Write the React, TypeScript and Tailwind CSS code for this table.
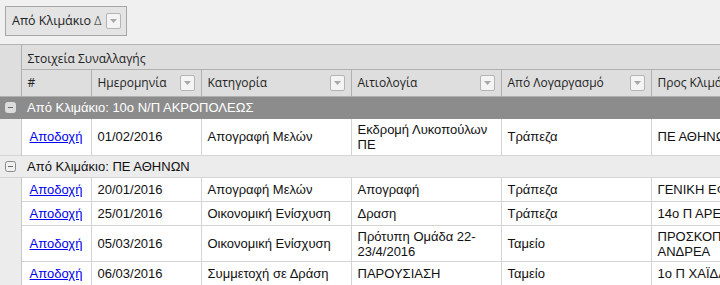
import React from "react";

const HF = "font-['Open_Sans',_'Noto_Sans',_sans-serif]";
const DF = "font-['Liberation_Sans',_Arial,_sans-serif]";

function FilterBtn() {
  return (
    <span className="inline-flex w-[15px] h-[16px] border border-[#b4b4b4] rounded-[2px] bg-[#f4f4f4] items-center justify-center shrink-0">
      <svg width="7" height="4" viewBox="0 0 7 4">
        <path d="M0 0 L7 0 L3.5 4 Z" fill="#a8a8a8" />
      </svg>
    </span>
  );
}

function Collapse({ dark }: { dark?: boolean }) {
  return (
    <svg width="11" height="11" viewBox="0 0 11 11" className="block">
      <rect x="0.5" y="0.5" width="10" height="10" rx="2" fill={dark ? "#dcdcdc" : "#f0f0f0"} stroke={dark ? "#dcdcdc" : "#8a8a8a"} />
      <rect x="3" y="5" width="5" height="1" fill="#6a6a6a" />
    </svg>
  );
}

type Row = { date: string; cat: string; reason: React.ReactNode; acc: string; to: React.ReactNode; h: string };

const g1: Row[] = [
  { date: "01/02/2016", cat: "Απογραφή Μελών", reason: <>Εκδρομή Λυκοπούλων<br />ΠΕ</>, acc: "Τράπεζα", to: "ΠΕ ΑΘΗΝΩΝ", h: "h-[37px]" },
];
const g2: Row[] = [
  { date: "20/01/2016", cat: "Απογραφή Μελών", reason: "Απογραφή", acc: "Τράπεζα", to: "ΓΕΝΙΚΗ ΕΦΟΡΕΙΑ", h: "h-[24px]" },
  { date: "25/01/2016", cat: "Οικονομική Ενίσχυση", reason: "Δραση", acc: "Τράπεζα", to: "14ο Π ΑΡΕΩΣ", h: "h-[24px]" },
  { date: "05/03/2016", cat: "Οικονομική Ενίσχυση", reason: <>Πρότυπη Ομάδα 22-<br />23/4/2016</>, acc: "Ταμείο", to: <>ΠΡΟΣΚΟΠΙΚΟ ΣΥΣΤΗΜΑ<br />ΑΝΔΡΕΑ</>, h: "h-[36px]" },
  { date: "06/03/2016", cat: "Συμμετοχή σε Δράση", reason: "ΠΑΡΟΥΣΙΑΣΗ", acc: "Ταμείο", to: "1ο Π ΧΑΪΔΑΡΙΟΥ", h: "h-[24px]" },
];

const cell = "border-b border-r border-[#d4d4d4] px-[6px] align-middle text-[13px] leading-[15px] text-[#111] whitespace-nowrap overflow-hidden";

function DataRow({ r }: { r: Row }) {
  return (
    <tr className={`${r.h} bg-white`}>
      <td className="bg-[#ececec] border-r border-[#c8c8c8]"></td>
      <td className={`${cell} text-center`}>
        <a href="#" className="text-[#0000ee] underline">Αποδοχή</a>
      </td>
      <td className={cell}>{r.date}</td>
      <td className={cell}>{r.cat}</td>
      <td className={cell}>{r.reason}</td>
      <td className={cell}>{r.acc}</td>
      <td className={cell}>{r.to}</td>
    </tr>
  );
}

function Th({ label, filter }: { label: string; filter?: boolean }) {
  return (
    <th className="border-r border-b border-[#b0b0b0] px-[6px] font-normal text-left align-middle">
      <div className="flex items-center justify-between">
        <span className="text-[12px] text-[#222] whitespace-nowrap">{label}</span>
        {filter && <FilterBtn />}
      </div>
    </th>
  );
}

export default function App() {
  return (
    <div className={`w-[720px] h-[285px] overflow-hidden bg-[#f0f0f0] ${DF}`}>
      <div className={`h-[45px] border-b border-[#b4b4b4] bg-[#f0f0f0] pt-[6px] pl-[5px] ${HF}`}>
        <div className="inline-flex items-center gap-[5px] h-[30px] border border-[#a6a6a6] bg-[#e4e4e4] pl-[6px] pr-[5px]">
          <span className="text-[12.5px] text-[#222]">Από Κλιμάκιο <span className="font-light">Δ</span></span>
          <FilterBtn />
        </div>
      </div>
      <table className="table-fixed border-collapse w-[800px]">
        <colgroup>
          <col className="w-[21px]" />
          <col className="w-[70px]" />
          <col className="w-[110px]" />
          <col className="w-[150px]" />
          <col className="w-[150px]" />
          <col className="w-[150px]" />
          <col className="w-[149px]" />
        </colgroup>
        <thead className={`bg-[#dedede] ${HF}`}>
          <tr className="h-[24px]">
            <th rowSpan={2} className="border-r border-b border-[#b0b0b0]"></th>
            <th colSpan={6} className="border-b border-[#b0b0b0] px-[6px] font-normal text-left">
              <span className="text-[12px] text-[#222]">Στοιχεία Συναλλαγής</span>
            </th>
          </tr>
          <tr className="h-[27px]">
            <Th label="#" />
            <Th label="Ημερομηνία" filter />
            <Th label="Κατηγορία" filter />
            <Th label="Αιτιολογία" filter />
            <Th label="Από Λογαργασμό" filter />
            <Th label="Προς Κλιμάκιο" />
          </tr>
        </thead>
        <tbody>
          <tr className="h-[22px] bg-[#8c8c8c]">
            <td colSpan={7} className="p-0">
              <div className="flex items-center">
                <div className="w-[21px] flex justify-center"><Collapse dark /></div>
                <span className="pl-[6px] text-[13px] text-white whitespace-nowrap">Από Κλιμάκιο: 10ο Ν/Π ΑΚΡΟΠΟΛΕΩΣ</span>
              </div>
            </td>
          </tr>
          {g1.map((r, i) => <DataRow key={i} r={r} />)}
          <tr className="h-[22px] bg-[#ececec]">
            <td colSpan={7} className="p-0 border-t border-b border-[#d4d4d4]">
              <div className="flex items-center">
                <div className="w-[21px] flex justify-center"><Collapse /></div>
                <span className="pl-[6px] text-[13px] text-[#111] whitespace-nowrap">Από Κλιμάκιο: ΠΕ ΑΘΗΝΩΝ</span>
              </div>
            </td>
          </tr>
          {g2.map((r, i) => <DataRow key={i} r={r} />)}
        </tbody>
      </table>
    </div>
  );
}
